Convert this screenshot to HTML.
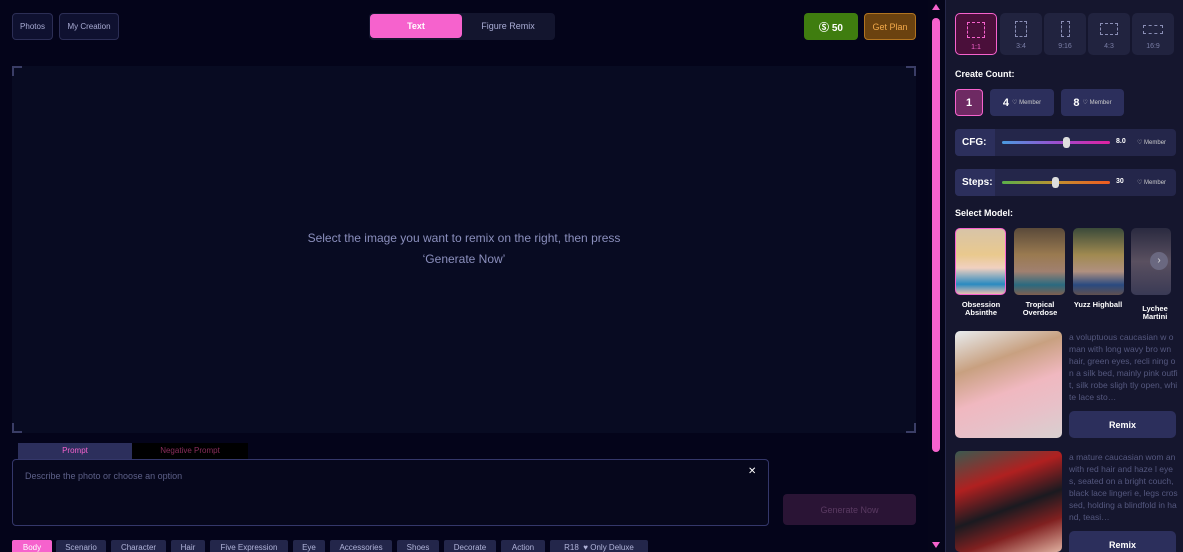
<!DOCTYPE html>
<html><head><meta charset="utf-8"><style>
*{box-sizing:border-box;margin:0;padding:0}
html,body{width:1183px;height:552px;overflow:hidden}
body{background:#04041a;font-family:"Liberation Sans",sans-serif;position:relative;color:#fff}
.a{position:absolute}
.btn{position:absolute;border:1px solid #2c2e55;border-radius:4px;background:#0f1130;color:#a9acd4;font-size:8px;display:flex;align-items:center;justify-content:center}
.corner{position:absolute;width:10px;height:10px;border-color:#3a3d66;border-style:solid}
.tag{position:absolute;top:540px;height:14px;background:#23264a;color:#b0b3d8;font-size:8px;border-radius:2px;padding:3px 0 0;text-align:center}
.ratio{position:absolute;top:13px;width:42px;height:42px;background:#21233f;border-radius:5px;color:#7a7ea6;font-size:7px;text-align:center}
.ratio i{display:block;margin:8px auto 6px;border:1.5px dashed #8a8eb5}
.lbl{position:absolute;font-size:9px;font-weight:bold;color:#fff}
.cnt{position:absolute;top:89px;height:27px;background:#2c2f5c;border-radius:4px;font-size:11px;font-weight:bold;display:flex;align-items:center;justify-content:center;gap:3px}
.cnt small{font-size:6px;font-weight:normal;color:#ccc}
.row{position:absolute;left:955px;width:221px;height:27px;background:#24264a;border-radius:4px}
.row b{position:absolute;left:0;top:0;width:40px;height:27px;background:#2c2f5c;border-radius:4px 0 0 4px;font-size:10px;padding:8px 0 0 7px}
.model{position:absolute;top:228px;width:51px;height:67px;border-radius:5px}
.mn{position:absolute;top:301px;width:60px;font-size:7.5px;font-weight:bold;text-align:center;line-height:8px}
.desc{position:absolute;left:1069px;width:109px;font-size:8.5px;line-height:12px;color:#55587f;word-break:break-all;height:72px;overflow:hidden}
.remix{position:absolute;left:1069px;width:107px;height:27px;background:#2c2f5c;border-radius:5px;font-size:9px;font-weight:bold;display:flex;align-items:center;justify-content:center}
</style></head><body>
<div class="btn" style="left:12px;top:13px;width:41px;height:27px">Photos</div>
<div class="btn" style="left:59px;top:13px;width:60px;height:27px">My Creation</div>
<div class="a" style="left:369px;top:13px;width:186px;height:27px;background:#13152e;border-radius:4px"></div>
<div class="a" style="left:370px;top:14px;width:92px;height:24px;background:#f662cd;border-radius:4px;font-size:9px;font-weight:bold;display:flex;align-items:center;justify-content:center">Text</div>
<div class="a" style="left:462px;top:14px;width:92px;height:24px;font-size:9px;color:#a9acd4;display:flex;align-items:center;justify-content:center">Figure Remix</div>
<div class="a" style="left:804px;top:13px;width:54px;height:27px;background:#3f7d0f;border-radius:4px;font-size:10px;font-weight:bold;display:flex;align-items:center;justify-content:center">Ⓢ 50</div>
<div class="a" style="left:864px;top:13px;width:52px;height:27px;background:#6b420f;border:1px solid #b17420;border-radius:4px;font-size:9px;color:#f2a94a;display:flex;align-items:center;justify-content:center">Get Plan</div>

<div class="a" style="left:12px;top:66px;width:904px;height:367px;background:#080b22"></div>
<div class="corner" style="left:12px;top:66px;border-width:2px 0 0 2px"></div>
<div class="corner" style="left:906px;top:66px;border-width:2px 2px 0 0"></div>
<div class="corner" style="left:12px;top:423px;border-width:0 0 2px 2px"></div>
<div class="corner" style="left:906px;top:423px;border-width:0 2px 2px 0"></div>
<div class="a" style="left:12px;top:228px;width:904px;text-align:center;font-size:12px;line-height:21px;color:#8b8fbd">Select the image you want to remix on the right, then press<br>‘Generate Now’</div>

<div class="a" style="left:18px;top:443px;width:114px;height:16px;background:#2c2f5c;color:#f662cd;font-size:8px;text-align:center;padding-top:3px">Prompt</div>
<div class="a" style="left:132px;top:443px;width:116px;height:16px;background:#000;color:#8a2d5c;font-size:8px;text-align:center;padding-top:3px">Negative Prompt</div>
<div class="a" style="left:12px;top:459px;width:757px;height:67px;border:1px solid #34376a;border-radius:4px;background:#06071c;font-size:9px;color:#5d6088;padding:11px 0 0 12px">Describe the photo or choose an option</div>
<div class="a" style="left:748px;top:466px;font-size:10px;color:#fff">✕</div>
<div class="a" style="left:783px;top:494px;width:133px;height:31px;background:#2a1435;border-radius:4px;color:#5a3a62;font-size:9px;display:flex;align-items:center;justify-content:center">Generate Now</div>

<div class="tag" style="left:12px;width:40px;background:#f662cd;color:#fff">Body</div>
<div class="tag" style="left:56px;width:50px">Scenario</div>
<div class="tag" style="left:111px;width:55px">Character</div>
<div class="tag" style="left:171px;width:34px">Hair</div>
<div class="tag" style="left:210px;width:78px">Five Expression</div>
<div class="tag" style="left:293px;width:32px">Eye</div>
<div class="tag" style="left:330px;width:62px">Accessories</div>
<div class="tag" style="left:397px;width:42px">Shoes</div>
<div class="tag" style="left:444px;width:52px">Decorate</div>
<div class="tag" style="left:501px;width:44px">Action</div>
<div class="tag" style="left:550px;width:98px">R18 &nbsp;♥ Only Deluxe</div>

<div class="a" style="left:928px;top:0;width:17px;height:552px;background:#05051a"></div>
<div class="a" style="left:932px;top:18px;width:8px;height:434px;background:#f662cd;border-radius:4px"></div>
<div class="a" style="left:932px;top:4px;width:0;height:0;border:4px solid transparent;border-bottom:6px solid #f662cd;border-top:0"></div>
<div class="a" style="left:932px;top:542px;width:0;height:0;border:4px solid transparent;border-top:6px solid #f662cd;border-bottom:0"></div>
<div class="a" style="left:945px;top:0;width:238px;height:552px;background:#15162e;border-left:1px solid #26284a"></div>

<div class="ratio" style="left:955px;background:#4a0f3a;border:1px solid #f662cd;color:#f662cd"><i style="width:18px;height:16px;border-color:#f662cd"></i>1:1</div>
<div class="ratio" style="left:1000px"><i style="width:12px;height:16px"></i>3:4</div>
<div class="ratio" style="left:1044px"><i style="width:9px;height:16px"></i>9:16</div>
<div class="ratio" style="left:1088px"><i style="width:18px;height:12px;margin-top:10px;margin-bottom:8px"></i>4:3</div>
<div class="ratio" style="left:1132px"><i style="width:20px;height:9px;margin-top:12px;margin-bottom:9px"></i>16:9</div>

<div class="lbl" style="left:955px;top:69px">Create Count:</div>
<div class="cnt" style="left:955px;width:28px;background:#6e2a63;border:1px solid #f662cd">1</div>
<div class="cnt" style="left:990px;width:64px">4 <small>♡ Member</small></div>
<div class="cnt" style="left:1061px;width:63px">8 <small>♡ Member</small></div>

<div class="row" style="top:129px"><b>CFG:</b>
<div class="a" style="left:47px;top:12px;width:108px;height:3px;border-radius:2px;background:linear-gradient(90deg,#4a9be0,#9a4fd0,#e020a0)"></div>
<div class="a" style="left:108px;top:8px;width:7px;height:11px;border-radius:3px;background:#ddd"></div>
<div class="a" style="left:161px;top:9px;font-size:7px;font-weight:bold">8.0</div>
<div class="a" style="left:182px;top:10px;font-size:6px;color:#ccc">♡ Member</div></div>
<div class="row" style="top:169px"><b>Steps:</b>
<div class="a" style="left:47px;top:12px;width:108px;height:3px;border-radius:2px;background:linear-gradient(90deg,#5bb04a,#c09030,#f05a20)"></div>
<div class="a" style="left:97px;top:8px;width:7px;height:11px;border-radius:3px;background:#ddd"></div>
<div class="a" style="left:161px;top:9px;font-size:7px;font-weight:bold">30</div>
<div class="a" style="left:182px;top:10px;font-size:6px;color:#ccc">♡ Member</div></div>

<div class="lbl" style="left:955px;top:208px">Select Model:</div>
<div class="model" style="left:955px;border:1px solid #f662cd;background:linear-gradient(180deg,#d8c4a8,#e9c98e 40%,#f0d0c0 60%,#2a8ac0 85%,#e8c0b0)"></div>
<div class="model" style="left:1014px;background:linear-gradient(180deg,#5a4a3a,#9a7a50 40%,#a08070 65%,#2a6a80 85%,#806050)"></div>
<div class="model" style="left:1073px;background:linear-gradient(180deg,#3a4a3a,#a08a50 40%,#b09080 65%,#2a4a80 85%,#605050)"></div>
<div class="model" style="left:1131px;width:40px;background:linear-gradient(180deg,#2a2a40,#5a5060 50%,#3a3a55)"></div>
<div class="a" style="left:1150px;top:252px;width:18px;height:18px;border-radius:9px;background:#6a6880;font-size:10px;color:#ddd;text-align:center;line-height:18px">›</div>
<div class="mn" style="left:951px">Obsession<br>Absinthe</div>
<div class="mn" style="left:1010px">Tropical<br>Overdose</div>
<div class="mn" style="left:1068px">Yuzz Highball</div>
<div class="mn" style="left:1125px;top:305px">Lychee<br>Martini</div>

<div class="a" style="left:955px;top:331px;width:107px;height:107px;border-radius:5px;background:linear-gradient(160deg,#e8ecef,#c8a080 30%,#f0b8c0 55%,#e8c0c8 75%,#d8d0d0)"></div>
<div class="desc" style="top:331px">a voluptuous caucasian w oman with long wavy bro wn hair, green eyes, recli ning on a silk bed, mainly pink outfit, silk robe sligh tly open, white lace sto…</div>
<div class="remix" style="top:411px">Remix</div>
<div class="a" style="left:955px;top:451px;width:107px;height:101px;border-radius:5px;background:linear-gradient(160deg,#3a5a50,#b02020 30%,#1a1a20 55%,#802020 75%,#e0b0a0)"></div>
<div class="desc" style="top:451px">a mature caucasian wom an with red hair and haze l eyes, seated on a bright couch, black lace lingeri e, legs crossed, holding a blindfold in hand, teasi…</div>
<div class="remix" style="top:531px">Remix</div>
</body></html>
